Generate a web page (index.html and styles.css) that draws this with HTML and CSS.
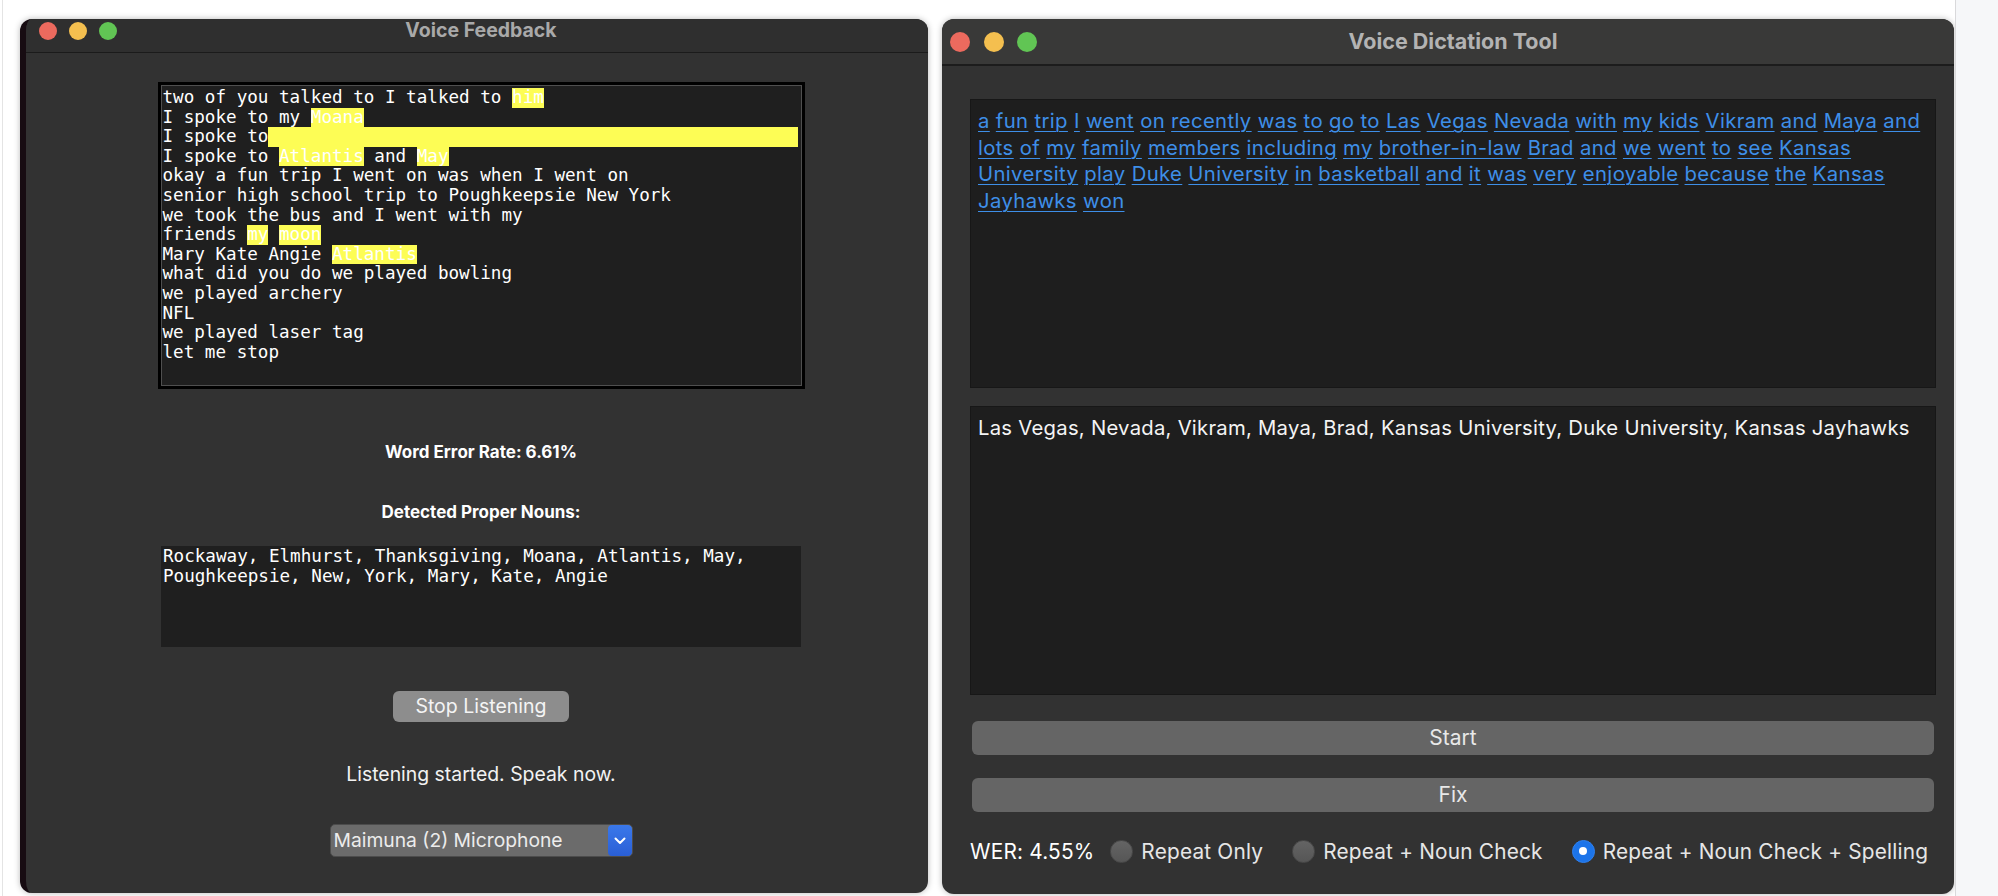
FILE: index.html
```html
<!DOCTYPE html>
<html>
<head>
<meta charset="utf-8">
<title>Voice Feedback / Voice Dictation Tool</title>
<link rel="stylesheet" href="styles.css">
</head>
<body>
<div class="desk">
  <div class="win win-left">
    <div class="titlebar titlebar-left">
      <div class="lights lights-left">
        <span class="light red"></span><span class="light yellow"></span><span class="light green"></span>
      </div>
      <div class="title title-left">Voice Feedback</div>
      <div></div>
    </div>
    <div class="left-body">
      <div class="transcript-frame">
        <div class="transcript">
          <div class="tl">two of you talked to I talked to <span class="hl">him</span></div>
          <div class="tl">I spoke to my <span class="hl">Moana</span></div>
          <div class="tl">I spoke to<span class="hl hl-fill"></span></div>
          <div class="tl">I spoke to <span class="hl">Atlantis</span> and <span class="hl">May</span></div>
          <div class="tl">okay a fun trip I went on was when I went on</div>
          <div class="tl">senior high school trip to Poughkeepsie New York</div>
          <div class="tl">we took the bus and I went with my</div>
          <div class="tl">friends <span class="hl">my</span> <span class="hl">moon</span></div>
          <div class="tl">Mary Kate Angie <span class="hl">Atlantis</span></div>
          <div class="tl">what did you do we played bowling</div>
          <div class="tl">we played archery</div>
          <div class="tl">NFL</div>
          <div class="tl">we played laser tag</div>
          <div class="tl">let me stop</div>
        </div>
      </div>
      <div class="bold-label wer-label">Word Error Rate: 6.61%</div>
      <div class="bold-label nouns-label">Detected Proper Nouns:</div>
      <div class="nouns-box">
        <div class="tl">Rockaway, Elmhurst, Thanksgiving, Moana, Atlantis, May,</div>
        <div class="tl">Poughkeepsie, New, York, Mary, Kate, Angie</div>
      </div>
      <button class="stop-btn">Stop Listening</button>
      <div class="status">Listening started. Speak now.</div>
      <div class="mic-select">
        <span class="mic-text">Maimuna (2) Microphone</span>
        <span class="mic-arrow"><svg width="12" height="8" viewBox="0 0 12 8"><path d="M1.5 1.5 L6 6 L10.5 1.5" fill="none" stroke="#fff" stroke-width="2" stroke-linecap="round" stroke-linejoin="round"/></svg></span>
      </div>
    </div>
  </div>

  <div class="win win-right">
    <div class="titlebar titlebar-right">
      <div class="lights lights-right">
        <span class="light red"></span><span class="light yellow"></span><span class="light green"></span>
      </div>
      <div class="title title-right">Voice Dictation Tool</div>
      <div></div>
    </div>
    <div class="right-body">
      <div class="text-area links">
        <div class="line"><a>a</a> <a>fun</a> <a>trip</a> <a>I</a> <a>went</a> <a>on</a> <a>recently</a> <a>was</a> <a>to</a> <a>go</a> <a>to</a> <a>Las</a> <a>Vegas</a> <a>Nevada</a> <a>with</a> <a>my</a> <a>kids</a> <a>Vikram</a> <a>and</a> <a>Maya</a> <a>and</a></div>
        <div class="line"><a>lots</a> <a>of</a> <a>my</a> <a>family</a> <a>members</a> <a>including</a> <a>my</a> <a>brother-in-law</a> <a>Brad</a> <a>and</a> <a>we</a> <a>went</a> <a>to</a> <a>see</a> <a>Kansas</a></div>
        <div class="line"><a>University</a> <a>play</a> <a>Duke</a> <a>University</a> <a>in</a> <a>basketball</a> <a>and</a> <a>it</a> <a>was</a> <a>very</a> <a>enjoyable</a> <a>because</a> <a>the</a> <a>Kansas</a></div>
        <div class="line"><a>Jayhawks</a> <a>won</a></div>
      </div>
      <div class="text-area plain">Las Vegas, Nevada, Vikram, Maya, Brad, Kansas University, Duke University, Kansas Jayhawks</div>
      <button class="wide-btn start-btn">Start</button>
      <button class="wide-btn fix-btn">Fix</button>
      <div class="radio-row">
        <span class="wer">WER: 4.55%</span>
        <span class="radio"></span><span class="radio-label">Repeat Only</span>
        <span class="radio"></span><span class="radio-label">Repeat + Noun Check</span>
        <span class="radio checked"></span><span class="radio-label">Repeat + Noun Check + Spelling</span>
      </div>
    </div>
  </div>
</div>
<div class="side-strip"></div>
</body>
</html>
```

FILE: styles.css
```css
html, body {
  margin: 0;
  padding: 0;
}
body {
  width: 1998px;
  height: 896px;
  background: #ffffff;
  font-family: "Inter", "Liberation Sans", sans-serif;
  display: flex;
  overflow: hidden;
}
.desk {
  width: 1953px;
  margin-left: 2px;
  border-left: 1px solid #e4e4e4;
  padding: 19px 0 0 17px;
  box-sizing: border-box;
  display: flex;
  align-items: flex-start;
  gap: 14px;
}
.side-strip {
  flex: 1;
  border-left: 1px solid #d9d9db;
  background: #f6f7f9;
}
.win {
  background: #323232;
  border-radius: 12px;
  overflow: hidden;
  display: flex;
  flex-direction: column;
  box-sizing: border-box;
  box-shadow: 0 0 6px rgba(0, 0, 0, 0.28);
}
.win-left {
  width: 908px;
  height: 874px;
  border-left: 6px solid #170c12;
}
.win-right {
  width: 1012px;
  height: 875px;
}
.titlebar {
  display: grid;
  grid-template-columns: 1fr auto 1fr;
  align-items: start;
  box-sizing: border-box;
}
.titlebar-left {
  height: 34px;
  background: #2f2f2f;
  border-bottom: 1px solid #1b1b1b;
  padding-left: 8px;
}
.titlebar-right {
  height: 47px;
  background: #393938;
  border-bottom: 2px solid #1c1c1c;
  padding-left: 10px;
}
.lights {
  display: flex;
}
.light {
  display: block;
  border-radius: 50%;
}
.red { background: #ec6a5e; }
.yellow { background: #f4bf4f; }
.green { background: #61c554; }
.lights-left {
  margin-left: 5px;
  margin-top: 3px;
  gap: 12px;
}
.lights-left .light {
  width: 18px;
  height: 18px;
}
.lights-right {
  margin-left: -2px;
  margin-top: 13px;
  gap: 13.5px;
}
.lights-right .light {
  width: 20px;
  height: 20px;
}
.title {
  font-weight: 700;
  color: #a9a9a9;
  white-space: nowrap;
}
.title-left {
  font-size: 19.5px;
  line-height: 22px;
  margin-top: 0;
}
.title-right {
  font-size: 21.5px;
  line-height: 24px;
  margin-top: 10px;
  color: #b3b3b3;
}

/* left window body */
.left-body {
  flex: 1;
  display: flex;
  flex-direction: column;
  align-items: center;
  padding-left: 8px;
}
.transcript-frame {
  margin-top: 29px;
  width: 647px;
  height: 307px;
  box-sizing: border-box;
  border: 3px solid #000;
  background: #1f1f1f;
}
.transcript {
  height: 100%;
  box-sizing: border-box;
  border: 1px solid #4f4f4f;
  padding: 2px 1px;
  font-family: "DejaVu Sans Mono", "Liberation Mono", monospace;
  font-size: 17.6px;
  line-height: 19.6px;
  color: #ffffff;
  overflow: hidden;
}
.tl {
  height: 19.6px;
  white-space: pre;
}
.hl {
  display: inline-block;
  height: 19.6px;
  line-height: 19.6px;
  vertical-align: top;
  background: #fdfd55;
}
.hl-fill {
  width: 530px;
}
.bold-label {
  font-weight: 700;
  font-size: 17px;
  line-height: 22px;
  color: #ffffff;
}
.wer-label {
  margin-top: 52px;
}
.nouns-label {
  margin-top: 38px;
}
.nouns-box {
  margin-top: 23px;
  width: 640px;
  height: 101px;
  box-sizing: border-box;
  background: #1f1f1f;
  padding: 1px 2px;
  font-family: "DejaVu Sans Mono", "Liberation Mono", monospace;
  font-size: 17.6px;
  line-height: 19.6px;
  color: #ffffff;
}
.stop-btn {
  margin-top: 44px;
  width: 176px;
  height: 31px;
  border: none;
  border-radius: 6px;
  background: #8d8d8d;
  color: #f4f4f4;
  font-family: "Inter", "Liberation Sans", sans-serif;
  font-size: 19.5px;
  line-height: 31px;
  padding: 0;
}
.status {
  margin-top: 40px;
  font-size: 19.4px;
  line-height: 24px;
  color: #f2f2f2;
}
.mic-select {
  margin-top: 38px;
  width: 303px;
  height: 33px;
  box-sizing: border-box;
  display: flex;
  align-items: stretch;
  background: #6b6b6b;
  border: 1px solid #4c4c4c;
  border-radius: 5px;
  overflow: hidden;
}
.mic-text {
  flex: 1;
  padding-left: 3px;
  font-size: 19.3px;
  line-height: 31px;
  color: #ececec;
  white-space: nowrap;
}
.mic-arrow {
  width: 24px;
  background: linear-gradient(#3a78ea, #2a5fd6);
  display: flex;
  align-items: center;
  justify-content: center;
  border-radius: 4px;
}

/* right window body */
.right-body {
  flex: 1;
  display: flex;
  flex-direction: column;
  padding: 33px 18px 0 28px;
}
.text-area {
  height: 289px;
  box-sizing: border-box;
  border: 1px solid #171717;
  background: #1e1e1e;
  padding: 8px 7px;
  font-size: 20.3px;
  line-height: 26.7px;
  letter-spacing: 0.25px;
}
.links .line {
  white-space: nowrap;
  letter-spacing: 0.37px;
}
.links a {
  color: #3e8fe8;
  text-decoration: underline;
  text-decoration-thickness: 1px;
  text-underline-offset: 3px;
}
.plain {
  margin-top: 18px;
  color: #f4f4f4;
  white-space: nowrap;
}
.wide-btn {
  margin: 0 2px;
  height: 34px;
  border: none;
  border-radius: 6px;
  background: #656565;
  color: #e8e8e8;
  font-family: "Inter", "Liberation Sans", sans-serif;
  font-size: 21px;
  line-height: 34px;
  padding: 0;
}
.start-btn {
  margin-top: 26px;
}
.fix-btn {
  margin-top: 23px;
}
.radio-row {
  margin-top: 27px;
  height: 24px;
  display: flex;
  align-items: center;
  font-size: 20.8px;
  letter-spacing: 0.2px;
  color: #eeeeee;
  white-space: nowrap;
}
.wer {
  color: #ffffff;
  margin-right: 16px;
}
.radio {
  width: 23px;
  height: 23px;
  box-sizing: border-box;
  border-radius: 50%;
  background: linear-gradient(#646464, #565656);
  border: 1px solid #4a4a4a;
  margin-right: 8px;
  flex: none;
}
.radio-label {
  color: #e6e6e6;
  margin-right: 29px;
}
.radio.checked {
  background: #1c74e9;
  border-color: #2f80ee;
  display: flex;
  align-items: center;
  justify-content: center;
}
.radio.checked::after {
  content: "";
  width: 8px;
  height: 8px;
  border-radius: 50%;
  background: #ffffff;
}
```
